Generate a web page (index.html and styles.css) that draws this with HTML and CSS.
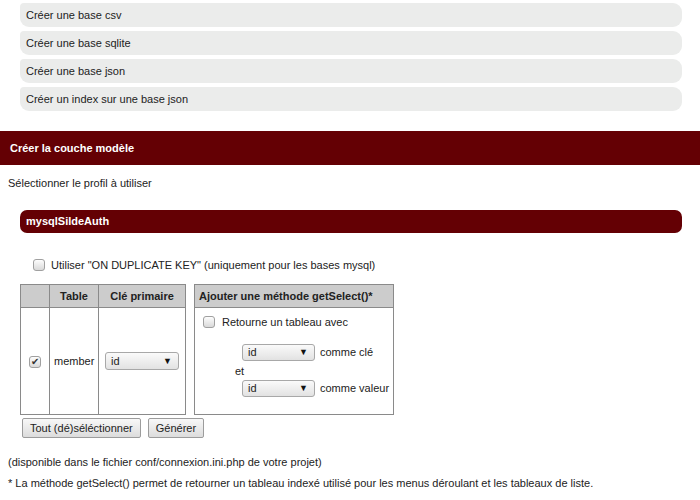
FILE: index.html
```html
<!DOCTYPE html>
<html lang="fr">
<head>
<meta charset="utf-8">
<title>Créer la couche modèle</title>
<link rel="stylesheet" href="styles.css">
</head>
<body>
<ul class="bases">
  <li>Créer une base csv</li>
  <li>Créer une base sqlite</li>
  <li>Créer une base json</li>
  <li>Créer un index sur une base json</li>
</ul>

<h2 class="section-title">Créer la couche modèle</h2>

<p class="intro">Sélectionner le profil à utiliser</p>

<h3 class="profile">mysqlSildeAuth</h3>

<label class="dup-row"><input type="checkbox" class="cb"> <span>Utiliser "ON DUPLICATE KEY" (uniquement pour les bases mysql)</span></label>

<table class="models">
  <colgroup>
    <col class="w-check"><col class="w-table"><col class="w-key"><col class="w-gap"><col class="w-get">
  </colgroup>
  <thead>
    <tr>
      <th></th>
      <th>Table</th>
      <th>Clé primaire</th>
      <th class="gap"></th>
      <th class="get-head">Ajouter une méthode getSelect()*</th>
    </tr>
  </thead>
  <tbody>
    <tr>
      <td class="center"><input type="checkbox" class="cb" checked></td>
      <td class="name">member</td>
      <td class="key"><span class="select"><span>id</span><span class="arrow">▼</span></span></td>
      <td class="gap"></td>
      <td class="get">
        <label class="get-line"><input type="checkbox" class="cb"> <span>Retourne un tableau avec</span></label>
        <div class="choices">
          <div class="choice"><span class="select"><span>id</span><span class="arrow">▼</span></span><span>comme clé</span></div>
          <div class="et">et</div>
          <div class="choice"><span class="select"><span>id</span><span class="arrow">▼</span></span><span>comme valeur</span></div>
        </div>
      </td>
    </tr>
  </tbody>
</table>

<div class="actions">
  <button type="button" class="btn">Tout (dé)séléctionner</button>
  <button type="button" class="btn">Générer</button>
</div>

<p class="note first">(disponible dans le fichier conf/connexion.ini.php de votre projet)</p>
<p class="note">* La méthode getSelect() permet de retourner un tableau indexé utilisé pour les menus déroulant et les tableaux de liste.</p>
</body>
</html>
```

FILE: styles.css
```css
html, body {
  margin: 0;
  padding: 0;
  background: #fff;
}
body {
  font-family: "Liberation Sans", Arial, sans-serif;
  font-size: 11px;
  line-height: 13px;
  color: #222;
}

.bases {
  list-style: none;
  margin: 3px 18px 0 20px;
  padding: 0;
}
.bases li {
  height: 24px;
  line-height: 24px;
  padding-left: 6px;
  margin-bottom: 4px;
  background: #ebeceb;
  border-radius: 4px 9px 9px 9px;
}

.section-title {
  margin: 20px 0 0;
  height: 34px;
  line-height: 34px;
  padding-left: 10px;
  background: #640004;
  color: #fff;
  font-size: 11px;
  font-weight: bold;
}

.intro {
  margin: 12px 8px 0;
}

.profile {
  margin: 20px 18px 0 20px;
  height: 23px;
  line-height: 23px;
  padding-left: 6px;
  background: #640004;
  color: #fff;
  font-size: 11px;
  font-weight: bold;
  border-radius: 7px;
}

.dup-row {
  display: flex;
  align-items: center;
  gap: 6px;
  height: 14px;
  margin: 25px 0 0 33px;
}

.cb {
  -webkit-appearance: none;
  appearance: none;
  width: 12px;
  height: 12px;
  margin: 0;
  border: 1px solid #a0a0a0;
  border-radius: 3px;
  background: linear-gradient(#fdfdfd, #d9d9d9);
  box-sizing: border-box;
  position: relative;
  flex: none;
}
.cb:checked::after {
  content: "✔";
  position: absolute;
  left: 1px;
  top: -1px;
  font-size: 10px;
  line-height: 12px;
  color: #333;
}

.models {
  margin: 12px 0 0 20px;
  border-collapse: collapse;
  table-layout: fixed;
  width: 374px;
}
.w-check { width: 29px; }
.w-table { width: 49px; }
.w-key { width: 87px; }
.w-gap { width: 9px; }
.w-get { width: 199px; }

.models th,
.models td {
  border: 1px solid #8a8a8a;
  padding: 0;
}
.models th {
  height: 22px;
  background: #cccccc;
  font-weight: bold;
  text-align: center;
  color: #222;
}
.models th.get-head {
  text-align: left;
  padding-left: 4px;
}
.models .gap {
  background: #fff;
  border-top: none;
  border-bottom: none;
}
.models td {
  vertical-align: middle;
}
.models td.center {
  text-align: center;
}
.models td.center .cb {
  vertical-align: middle;
}
.models td.name {
  padding-left: 4px;
}
.models td.key {
  padding-left: 6px;
}
.models td.get {
  height: 99px;
  vertical-align: top;
  padding: 7px 0 0 8px;
  white-space: nowrap;
}

.get-line {
  display: flex;
  align-items: center;
  gap: 7px;
  height: 14px;
}
.choices {
  margin: 15px 0 0 32px;
}
.choice {
  display: flex;
  align-items: center;
  gap: 5px;
  height: 17px;
  padding-left: 7px;
  white-space: nowrap;
}
.et {
  height: 19px;
  padding-top: 4px;
  box-sizing: border-box;
  line-height: 13px;
}

.select {
  display: inline-flex;
  align-items: center;
  justify-content: space-between;
  width: 74px;
  height: 18px;
  box-sizing: border-box;
  padding: 0 6px 0 5px;
  border: 1px solid #a8a8a8;
  border-radius: 3px;
  background: linear-gradient(#fafafa, #e2e2e2);
  color: #222;
  flex: none;
}
.choice .select {
  width: 73px;
  height: 17px;
}
.arrow {
  font-size: 9px;
  line-height: 9px;
  color: #111;
}

.actions {
  display: flex;
  gap: 7px;
  margin: 3px 0 0 22px;
}
.btn {
  font-family: "Liberation Sans", Arial, sans-serif;
  font-size: 11px;
  color: #222;
  height: 20px;
  padding: 0 7px;
  border: 1px solid #9c9c9c;
  border-radius: 2px;
  background: linear-gradient(#f8f8f8, #dcdcdc);
}

.note {
  margin: 18px 8px 0;
}
.note + .note {
  margin-top: 8px;
}
```
